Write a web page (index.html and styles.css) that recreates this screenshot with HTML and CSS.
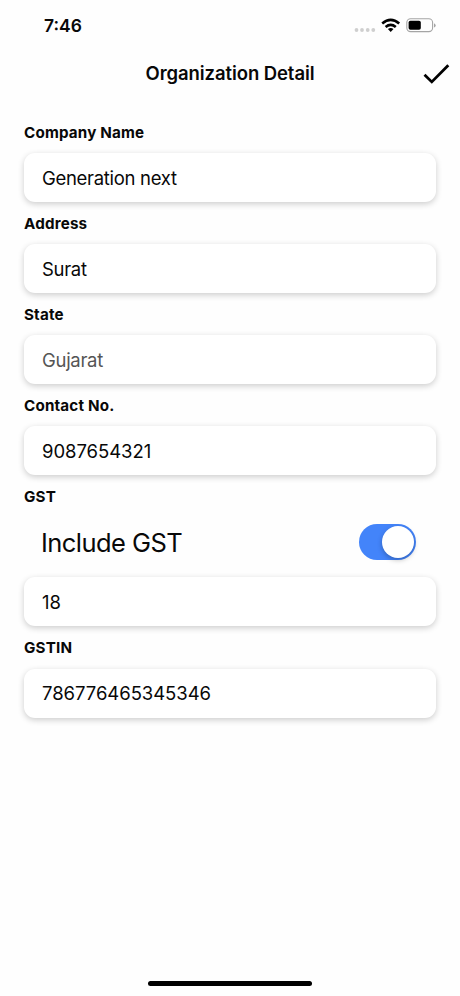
FILE: index.html
```html
<!DOCTYPE html>
<html lang="en">
<head>
<meta charset="utf-8">
<title>Organization Detail</title>
<link rel="stylesheet" href="styles.css">
</head>
<body>
<div class="screen">
  <div class="status">
    <span class="time">7:46</span>
    <svg class="status-icons" width="84" height="20" viewBox="0 0 84 20">
      <g fill="#cfcfcf"><circle cx="4.5" cy="14" r="1.9"/><circle cx="10" cy="14" r="1.9"/><circle cx="15.7" cy="14" r="1.9"/><circle cx="21.3" cy="14" r="1.9"/></g>
      <g fill="none" stroke="#000" stroke-width="2.6"><path d="M30.2 7.4Q38.7 .2 47.2 7.4"/><path d="M33.6 10.9Q38.7 6.7 43.8 10.9"/></g>
      <path d="M35.9 13.1Q38.7 10.9 41.5 13.1L38.7 15.9Z"/>
      <rect x="54.8" y="2.8" width="25.8" height="12.8" rx="3.8" fill="none" stroke="#a5a5a5" stroke-width="1.1"/>
      <rect x="56.6" y="4.7" width="12.2" height="9" rx="1.8"/>
      <path d="M82 7.3Q83.7 8 83.7 9.4T82 11.5Z" fill="#a5a5a5"/>
    </svg>
  </div>
  <header class="header">
    <h1 class="title">Organization Detail</h1>
    <svg class="check" width="28" height="22" viewBox="0 0 28 22" fill="none" stroke="#000" stroke-width="2.8"><path d="M1.5 11.8L8.8 18.9L25.3 2.2"/></svg>
  </header>
  <main class="form">
    <div class="label">Company Name</div>
    <div class="field">Generation next</div>
    <div class="label">Address</div>
    <div class="field">Surat</div>
    <div class="label">State</div>
    <div class="field muted">Gujarat</div>
    <div class="label">Contact No.</div>
    <div class="field number">9087654321</div>
    <div class="label">GST</div>
    <div class="toggle-row"><span class="toggle-text">Include GST</span><span class="toggle"><span class="knob"></span></span></div>
    <div class="field number">18</div>
    <div class="label">GSTIN</div>
    <div class="field number">786776465345346</div>
  </main>
  <div class="home"></div>
</div>
</body>
</html>
```
FILE: styles.css
```css
* { box-sizing: border-box; }
body { margin: 0; background: #fefefe; color: #080808; font-family: Inter, "Liberation Sans", sans-serif; }
.screen { width: 460px; height: 996px; display: flex; flex-direction: column; overflow: hidden; }
.status { height: 50px; padding: 0 24px 0 44px; display: flex; align-items: center; justify-content: space-between; }
.time { font-size: 17.5px; font-weight: 600; }
.status-icons { display: block; margin-top: 2px; }
.header { height: 46px; display: grid; grid-template-columns: 40px 1fr 40px; align-items: center; }
.title { grid-column: 2; margin: 0; text-align: center; font-size: 18.5px; font-weight: 600; letter-spacing: -0.08px; white-space: nowrap; }
.check { display: block; margin-left: 3px; margin-top: 1px; }
.form { padding: 15px 24px 0; flex: 1; }
.label { height: 42.1px; padding-top: 2px; line-height: 40.1px; font-size: 15.2px; font-weight: 700; letter-spacing: 0.18px; white-space: nowrap; }
.field { height: 49px; padding: 0 18px; display: flex; align-items: center; border-radius: 11px; background: #fff; font-size: 18.5px; letter-spacing: -0.3px; box-shadow: 0 2px 6px rgba(0, 0, 0, .2); white-space: nowrap; }
.number { letter-spacing: -0.05px; }
.muted { color: #555; }
.toggle-row { height: 60px; padding: 0 20px 10px 17px; display: flex; align-items: center; justify-content: space-between; }
.toggle-text { font-size: 25.5px; letter-spacing: -0.55px; }
.toggle { width: 57px; height: 36px; padding: 2px; display: flex; justify-content: flex-end; border-radius: 18px; background: #4384fa; }
.knob { width: 32px; height: 32px; border-radius: 50%; background: #fff; box-shadow: 0 2px 5px rgba(0, 0, 0, .25); }
.home { width: 164px; height: 5px; margin: 0 auto 10px; border-radius: 3px; background: #000; }
```
